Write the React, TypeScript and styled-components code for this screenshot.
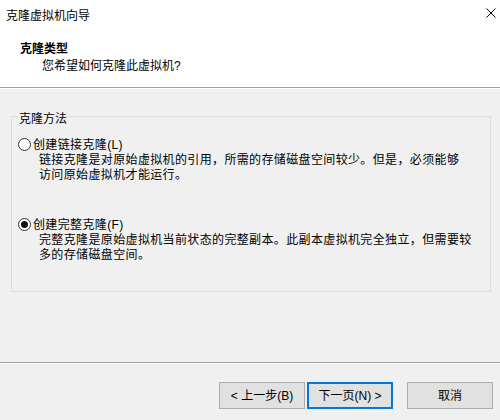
import * as React from "react";
import styled, { createGlobalStyle } from "styled-components";

const Global = createGlobalStyle`
  body {
    margin: 0;
    background: #f0f0f0;
  }
`;

const Window = styled.div`
  width: 500px;
  height: 420px;
  display: flex;
  flex-direction: column;
  background: #f0f0f0;
  font-family: "Liberation Sans", "Noto Sans CJK SC", sans-serif;
  font-size: 12px;
  color: #000;
  overflow: hidden;
`;

const Header = styled.div`
  box-sizing: border-box;
  height: 88px;
  background: #fff;
  border-bottom: 1px solid #a0a0a0;
`;

const TitleBar = styled.div`
  display: flex;
  justify-content: space-between;
  padding: 8px 4px 0 6px;
  line-height: 16px;
`;

const Close = styled.svg`
  width: 10px;
  height: 10px;
`;

const Heading = styled.div`
  margin-top: 17px;
  padding-left: 20px;
  font-weight: bold;
  line-height: 16px;
`;

const SubHeading = styled.div`
  margin-top: 1px;
  padding-left: 42px;
  line-height: 16px;
`;

const Body = styled.div`
  flex: 1;
  border-top: 1px solid #fff;
  padding: 27px 9px 0 11px;
`;

const GroupBox = styled.div`
  position: relative;
  box-sizing: border-box;
  height: 176px;
  border: 1px solid #dcdcdc;
  padding: 21px 0 0 6px;
`;

const Legend = styled.span`
  position: absolute;
  top: -6px;
  left: 6px;
  padding: 0 1px;
  line-height: 16px;
  background: #f0f0f0;
`;

const Option = styled.div<{ $gap?: number }>`
  margin-top: ${(p) => p.$gap ?? 0}px;
  letter-spacing: 0.36px;
`;

const OptionHead = styled.label`
  display: flex;
  align-items: flex-start;
  gap: 2px;
  line-height: 15px;
`;

const Radio = styled.span<{ $checked?: boolean }>`
  box-sizing: border-box;
  width: 13px;
  height: 13px;
  border-radius: 50%;
  border: 1px solid #333;
  background: #fff;
  display: flex;
  align-items: center;
  justify-content: center;
  &::after {
    content: "";
    width: 7px;
    height: 7px;
    border-radius: 50%;
    background: ${(p) => (p.$checked ? "#111" : "transparent")};
  }
`;

const Desc = styled.div`
  padding-left: 21px;
  line-height: 15px;
`;

const Footer = styled.div`
  box-sizing: border-box;
  height: 58px;
  border-top: 1px solid #a0a0a0;
  box-shadow: inset 0 1px 0 #fff;
  padding: 19px 7px 0 0;
  display: flex;
  justify-content: flex-end;
`;

const Button = styled.button<{ $primary?: boolean; $space?: number }>`
  box-sizing: border-box;
  width: 86px;
  height: 27px;
  margin-left: ${(p) => p.$space ?? 0}px;
  background: #e1e1e1;
  border: ${(p) => (p.$primary ? "2px solid #0078d7" : "1px solid #adadad")};
  border-radius: 0;
  padding: 1px 0 0;
  font-family: inherit;
  font-size: 12px;
  color: #000;
  line-height: 15px;
`;

export default function App() {
  return (
    <Window>
      <Global />
      <Header>
        <TitleBar>
          <span>克隆虚拟机向导</span>
          <Close viewBox="0 0 10 10">
            <path d="M0.5 0.5 L9.5 9.5 M9.5 0.5 L0.5 9.5" stroke="#000" strokeWidth="1" />
          </Close>
        </TitleBar>
        <Heading>克隆类型</Heading>
        <SubHeading>您希望如何克隆此虚拟机?</SubHeading>
      </Header>

      <Body>
        <GroupBox>
          <Legend>克隆方法</Legend>

          <Option>
            <OptionHead>
              <Radio />
              <span>创建链接克隆(L)</span>
            </OptionHead>
            <Desc>
              链接克隆是对原始虚拟机的引用，所需的存储磁盘空间较少。但是，必须能够
              <br />
              访问原始虚拟机才能运行。
            </Desc>
          </Option>

          <Option $gap={35}>
            <OptionHead>
              <Radio $checked />
              <span>创建完整克隆(F)</span>
            </OptionHead>
            <Desc>
              完整克隆是原始虚拟机当前状态的完整副本。此副本虚拟机完全独立，但需要较
              <br />
              多的存储磁盘空间。
            </Desc>
          </Option>
        </GroupBox>
      </Body>

      <Footer>
        <Button>&lt; 上一步(B)</Button>
        <Button $primary $space={2}>下一页(N) &gt;</Button>
        <Button $space={14}>取消</Button>
      </Footer>
    </Window>
  );
}
